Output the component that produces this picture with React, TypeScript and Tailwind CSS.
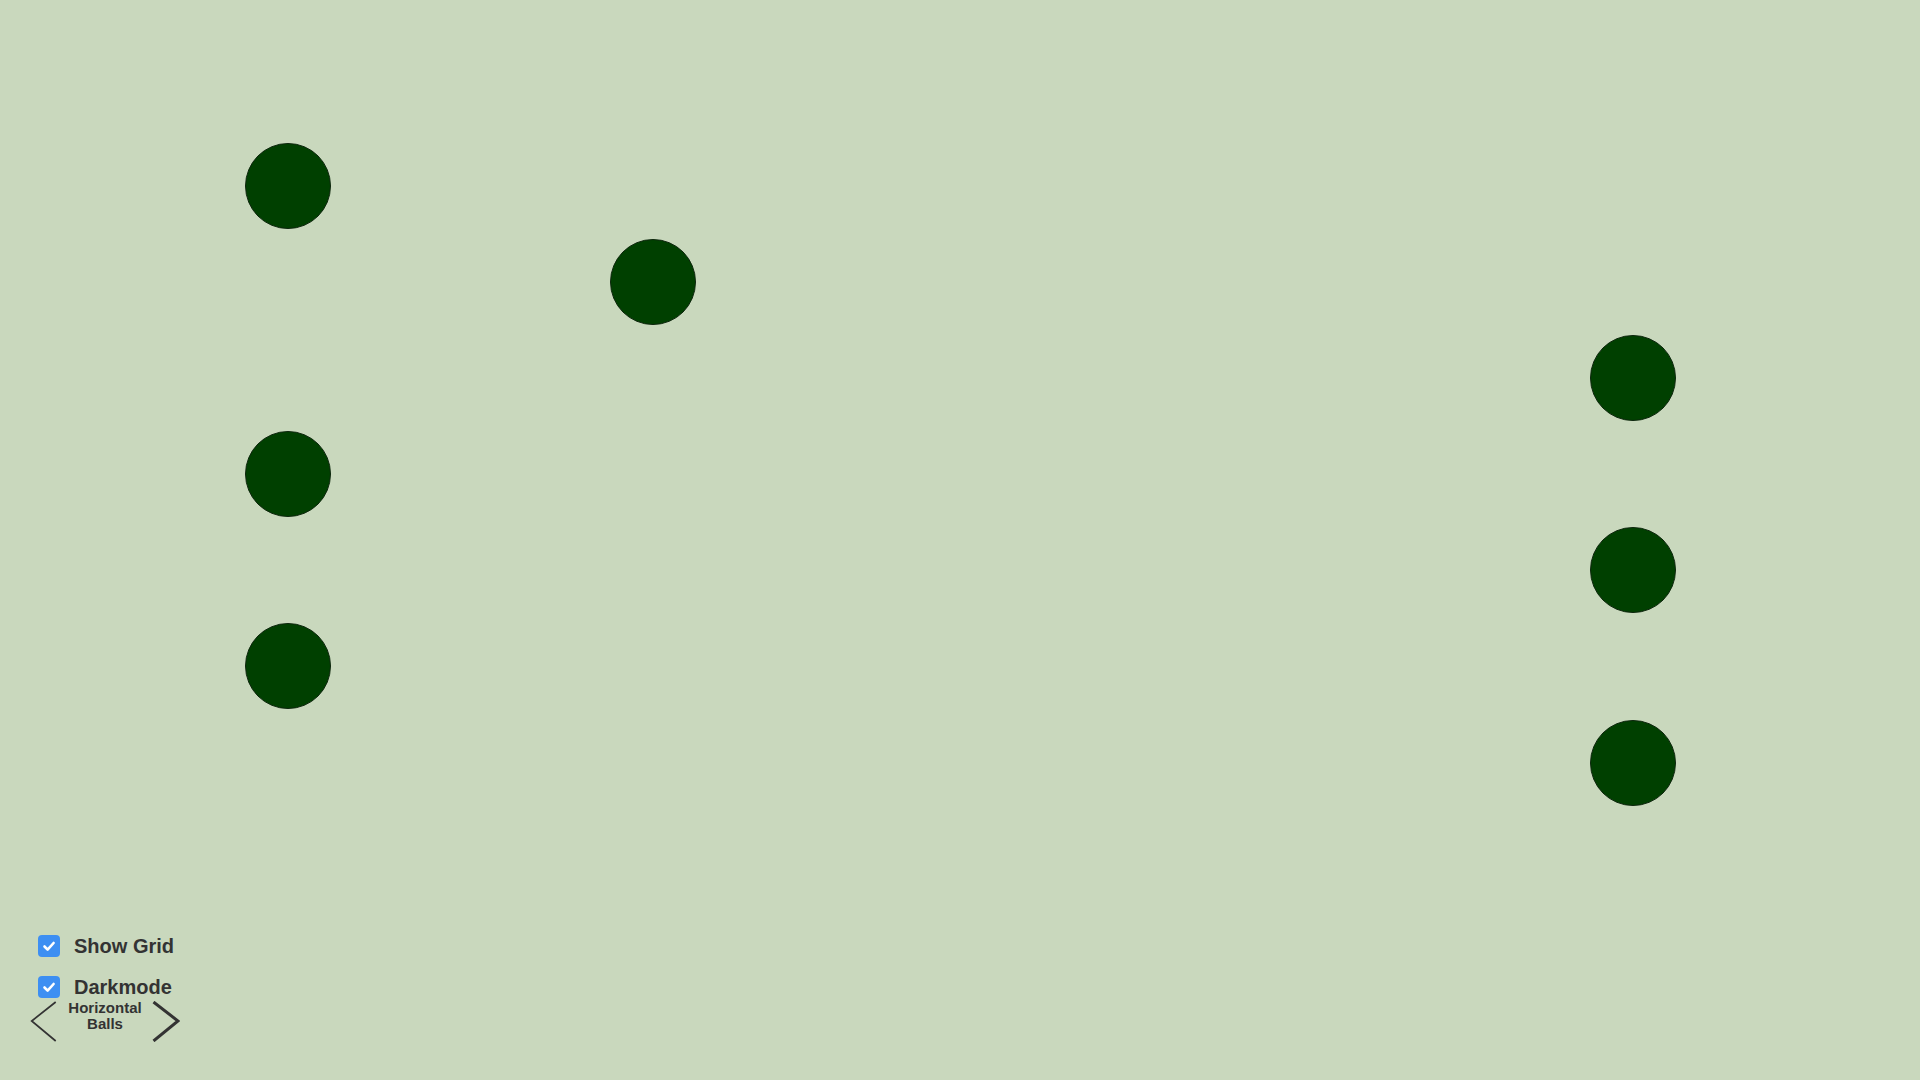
import React from "react";

const balls = [
  "left-[245px] top-[143px]",
  "left-[610px] top-[239px]",
  "left-[245px] top-[431px]",
  "left-[245px] top-[623px]",
  "left-[1590px] top-[335px]",
  "left-[1590px] top-[527px]",
  "left-[1590px] top-[720px]",
];

function Check() {
  return (
    <div className="w-[22px] h-[22px] rounded-[4px] bg-[#3d8ff2] flex items-center justify-center shrink-0">
      <svg width="22" height="22" viewBox="0 0 22 22">
        <polyline
          points="6.5,11.5 9.6,14.6 15.6,8"
          fill="none"
          stroke="#ffffff"
          strokeWidth="2.6"
          strokeLinecap="round"
          strokeLinejoin="round"
        />
      </svg>
    </div>
  );
}

export default function App() {
  return (
    <div className="relative w-screen h-screen overflow-hidden bg-[#c9d8bd] font-['Liberation_Sans',Arial,sans-serif]">
      {balls.map((c, i) => (
        <div
          key={i}
          className={`absolute ${c} w-[86px] h-[86px] rounded-full bg-[#004000] border border-[#0d260d]`}
        />
      ))}

      <div className="absolute left-[38px] top-[935px] flex flex-col gap-[19px]">
        <label className="flex items-center gap-[14px] h-[22px]">
          <Check />
          <span className="text-[20px] font-bold text-[#333333] leading-none">Show Grid</span>
        </label>
        <label className="flex items-center gap-[14px] h-[22px]">
          <Check />
          <span className="text-[20px] font-bold text-[#333333] leading-none">Darkmode</span>
        </label>
      </div>

      <div className="absolute left-[30px] top-[1000px] flex items-start">
        <svg width="28" height="41" viewBox="0 0 28 41" className="mt-[1px]">
          <polyline points="25.7,1 1.7,20 25.7,40" fill="none" stroke="#333333" strokeWidth="1.7" />
        </svg>
        <div className="w-[94px] text-center text-[15px] leading-[16px] font-bold text-[#333333]">
          Horizontal
          <br />
          Balls
        </div>
        <svg width="28" height="41" viewBox="0 0 28 41" className="mt-[1px]">
          <polyline points="1.5,1 26,20 1.5,40" fill="none" stroke="#333333" strokeWidth="3" />
        </svg>
      </div>
    </div>
  );
}
